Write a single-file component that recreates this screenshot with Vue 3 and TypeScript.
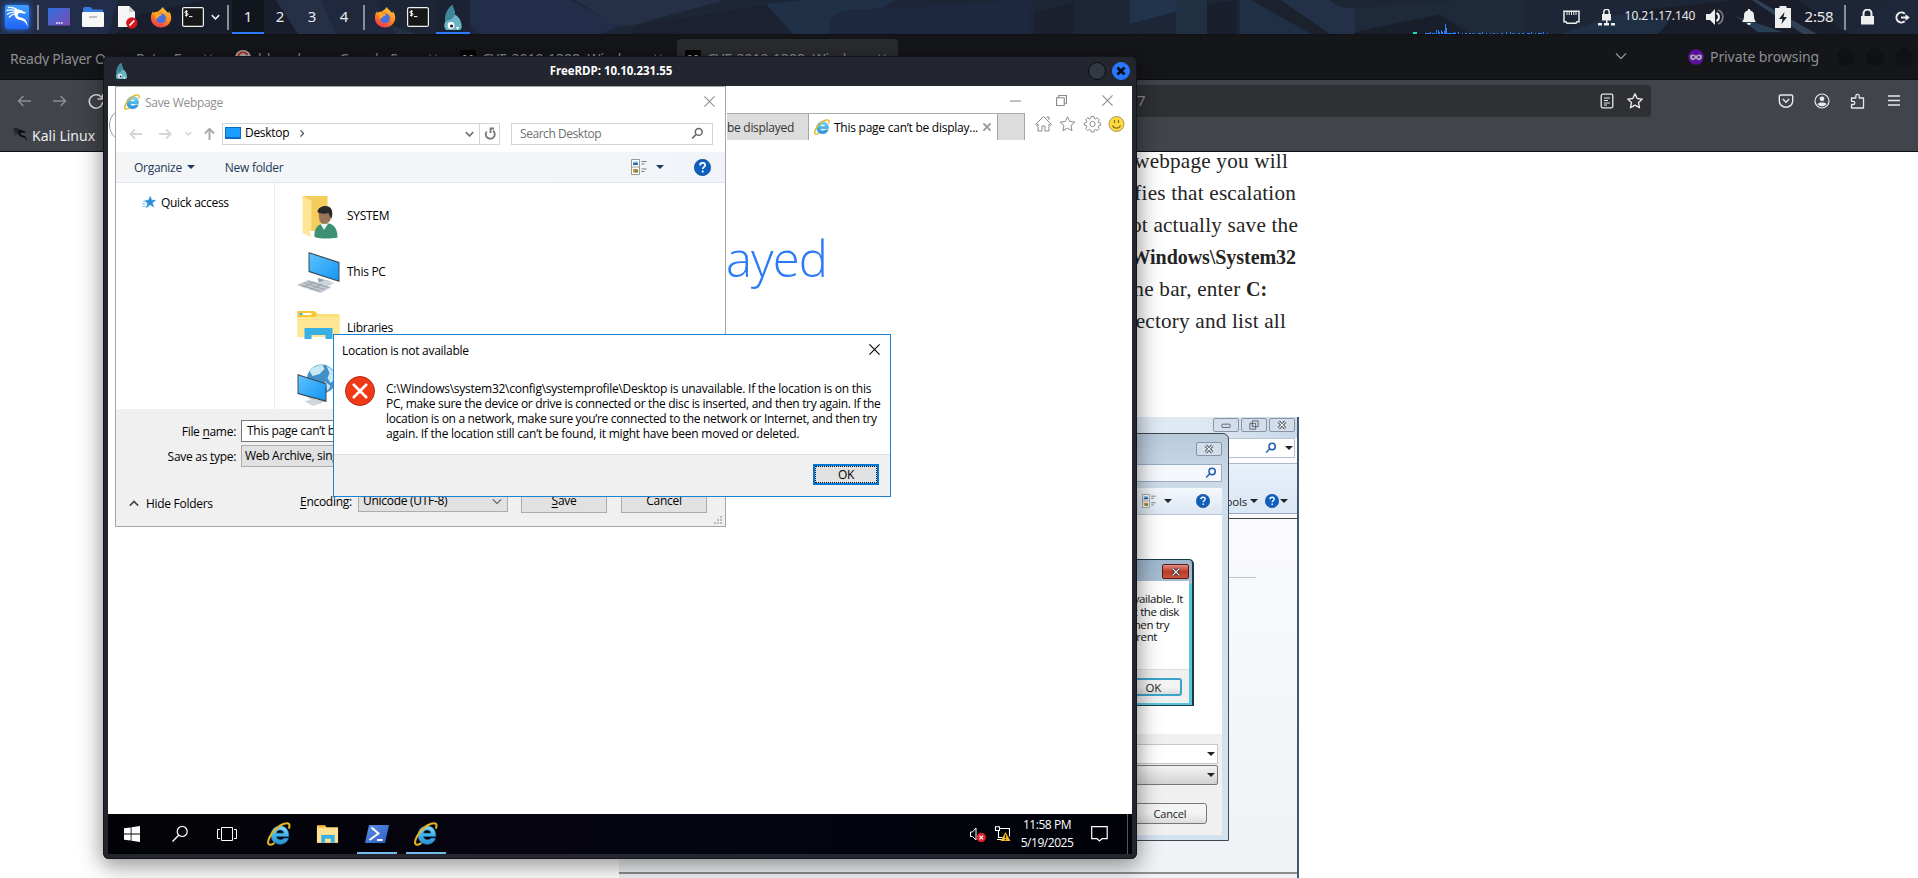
<script setup lang="ts">
interface Place { name: string; icon: string }

const places: Place[] = [
  { name: 'SYSTEM', icon: 'user-folder' },
  { name: 'This PC', icon: 'computer' },
  { name: 'Libraries', icon: 'libraries' },
  { name: 'Network', icon: 'network' },
]
const workspaces = [1, 2, 3, 4]
const taskbar = [
  { icon: 'ie', open: false },
  { icon: 'explorer', open: false },
  { icon: 'powershell', open: true },
  { icon: 'ie', open: true },
]
const bars: [number, number, number][] = [
  [12, 6, 1], [17, 1, 2], [19, 3, 1], [23, 1, 4], [25, 1, 4], [26, 1, 2], [28, 1, 4], [29, 1, 2], [31, 1, 3], [32, 1, 10], [33, 1, 6],
  [34, 9, 1], [41, 1, 2], [45, 1, 2], [49, 1, 1], [52, 2, 1], [56, 2, 1], [59, 1, 1], [61, 1, 1], [65, 3, 1], [69, 1, 2], [73, 1, 1],
  [77, 1, 1], [80, 2, 1], [84, 1, 1], [88, 2, 1], [93, 1, 2], [97, 1, 2], [99, 1, 1], [101, 1, 1], [105, 2, 1], [109, 2, 1],
  [114, 3, 1], [118, 1, 2], [122, 1, 1], [125, 4, 1], [130, 1, 2], [134, 1, 1],
]
</script>

<template>
  <div class="desktop">
    <svg class="defs" aria-hidden="true">
      <defs>
        <linearGradient id="g-kali" x1="0" y1="0" x2="0" y2="1"><stop offset="0" stop-color="#3fa0ff" /><stop offset="1" stop-color="#1f63f5" /></linearGradient>
        <linearGradient id="g-desk" x1="0" y1="0" x2="1" y2="1"><stop offset="0" stop-color="#2f6fe0" /><stop offset="1" stop-color="#7d4bb5" /></linearGradient>
        <linearGradient id="g-fox" x1="0.8" y1="0" x2="0.3" y2="1"><stop offset="0" stop-color="#ffd23e" /><stop offset="0.5" stop-color="#ff8a1f" /><stop offset="1" stop-color="#f4364c" /></linearGradient>
        <linearGradient id="g-ie" x1="0" y1="0" x2="0" y2="1"><stop offset="0" stop-color="#8fdcf8" /><stop offset="0.5" stop-color="#41b4e8" /><stop offset="1" stop-color="#2a8fd4" /></linearGradient>
        <linearGradient id="g-screen" x1="0" y1="0" x2="1" y2="1"><stop offset="0" stop-color="#5cc3ff" /><stop offset="1" stop-color="#1595f2" /></linearGradient>
        <linearGradient id="g-ps" x1="0" y1="0" x2="1" y2="1"><stop offset="0" stop-color="#5a8fe6" /><stop offset="1" stop-color="#2a5cc0" /></linearGradient>
      </defs>
      <symbol id="i-dragon" viewBox="0 0 24 24">
        <path d="M11 4.800c3-.6 5 .2 6.500 1.200l4 2-2.500.8c-2-.8-5-1.200-6 .2-.8 1.400 0 2.800 1.500 3.200 5 .8 8.300 2.800 8 10-1.200-5-3.500-6.600-7.500-7.200C9.500 14.200 8 8.500 11 4.800z" fill="currentColor" />
        <path d="M3 2.500c4-.4 7.500.6 9.500 2.700M1.500 5.500c3-.8 6.500-.9 9.500.2M2 9.500c2-1.800 5-2.700 9-2.300M4 12.500c1.500-2 3.500-3.200 6-3.600" fill="none" stroke="currentColor" stroke-width="1.300" />
      </symbol>
      <symbol id="i-firefox" viewBox="0 0 24 24">
        <path d="M14 1c1 3 4.500 4 6 7 .6-.5.500-1.600.3-2.500C22.500 8 23.500 11 23 14.500 22 20 17.500 23.400 12 23.400 5.800 23.400 1 18.800 1 12.800c0-3 .8-5.300 2.200-7 .1 1 .4 1.600.9 2C5 6.500 6.500 6 8 6.300 9.500 5 12 4 14 1z" fill="url(#g-fox)" />
        <circle cx="12" cy="13.500" r="5.400" fill="#4a6fe0" />
        <path d="M3 8c3-2 5-1 6.500.4 1.500.3 3 .1 3.500 1.100-.8 1.500-2.600 1.300-3.500 2.300-.9 1-.9 2-2 2-2 0-2.500-1.500-2-3z" fill="#ffa62b" />
      </symbol>
      <symbol id="i-terminal" viewBox="0 0 22 20">
        <rect x=".6" y=".6" width="20.800" height="18.800" rx="1.500" fill="#171717" stroke="#f0f0ee" stroke-width="1.200" />
        <path d="M5.800 4.200H4a1 1 0 0 0 0 2.100h.9a1 1 0 0 1 0 2.100H3M4.400 3.200v6.400M7 9.600h3.400" fill="none" stroke="#fff" stroke-width="1" />
      </symbol>
      <symbol id="i-freerdp" viewBox="0 0 20 25">
        <path d="M9.500 0c.3 2.500 2.800 6 2.600 9.800 3.400 1.700 7 6.200 6.600 13.200L17 25H3c-2-2.600-2.500-5.500-.6-8.500C1.600 9.500 4.500 3.600 9.500 0z" fill="#6ab5c4" />
        <path d="M9.500 0c.3 2.500 2.800 6 2.600 9.800L9 14l-6.600 2.500C1.600 9.500 4.500 3.600 9.500 0z" fill="#41859a" />
        <circle cx="8" cy="20.500" r="3.400" fill="#fff" /><circle cx="8.600" cy="21" r="1.600" fill="#222" />
        <path d="M13 22l1.500 3L16 22" fill="#fff" />
      </symbol>
      <symbol id="i-ie" viewBox="0 0 24 24">
        <path fill-rule="evenodd" d="M21.800 14.600H9.400c.2 2 1.700 3.200 3.900 3.200 1.600 0 2.800-.5 3.500-1.500h4.700c-1.200 3.600-4.300 6-8.300 6-5.300 0-9.200-3.800-9.200-9.200S8 3.900 13.200 3.900s8.900 4 8.600 10.700zM9.400 11.200h7.500c-.2-2-1.700-3.200-3.800-3.200s-3.500 1.200-3.700 3.200z" fill="url(#g-ie)" stroke="#2684c4" stroke-width=".5" />
        <path d="M7.500 21C4.500 23.200 1.800 23.300 1.200 21.400.3 18.200 4 11 9.500 6.300 14.500 2 20.300.2 22 2c.8 1 .6 2.600-.2 4.600" fill="none" stroke="#e6b422" stroke-width="2.100" />
      </symbol>
      <symbol id="i-star" viewBox="0 0 18 18"><path d="M9 1.800l2.200 4.700 5.100.6-3.800 3.500 1 5.100L9 13.200l-4.500 2.500 1-5.100L1.700 7.100l5.100-.6z" fill="none" stroke="currentColor" stroke-linejoin="round" /></symbol>
      <symbol id="i-close" viewBox="0 0 10 10"><path d="M.4.4l9.200 9.200M9.600.4L.4 9.600" stroke="currentColor" /></symbol>
      <symbol id="i-back" viewBox="0 0 14 12"><path d="M14 6H1.500M6.500 1l-5 5 5 5" fill="none" stroke="currentColor" /></symbol>
      <symbol id="i-chevron" viewBox="0 0 12 8"><path d="M1 1.500l5 5 5-5" fill="none" stroke="currentColor" /></symbol>
      <symbol id="i-search" viewBox="0 0 16 16"><circle cx="9.500" cy="6" r="4.200" fill="none" stroke="currentColor" /><path d="M6.500 9L1.500 14" stroke="currentColor" /></symbol>
      <symbol id="i-explorer" viewBox="0 0 24 20">
        <path d="M1 1h8l2 2h12v16H1z" fill="#f7d774" /><path d="M1 4h22v15H1z" fill="#ffe394" /><path d="M2 1h8v2H2z" fill="#f2b92e" />
        <path d="M5.500 19v-8h14v8h-4v-4h-6v4z" fill="#38b0e4" />
      </symbol>
      <symbol id="i-powershell" viewBox="0 0 24 18">
        <path d="M4 0h20l-4 18H0z" fill="url(#g-ps)" /><path d="M6.500 2.500l7 6-9 6.500M12 15h5.500" fill="none" stroke="#fff" stroke-width="2" />
      </symbol>
      <symbol id="i-user-folder" viewBox="0 0 44 44">
        <path d="M7 1h25v36H15z" fill="#f4cd5c" /><path d="M7 1l9 5v36l-9-4z" fill="#ffe596" /><path d="M14 36h6v4l-4 2z" fill="#fff" />
        <path d="M19 42c-.8-7 2.500-12 8-13.500h7c5 1.500 8 6 8 14-7 1.500-17 1.500-23-.5z" fill="#3d9172" /><path d="M25 29l3.500 6 4-6z" fill="#eaf4f0" />
        <path d="M23 17c2-4 12-5 13 0l-1 8c-2 4-8 5-11 1z" fill="#9a7458" /><path d="M22 17c0-4 5-6.500 9.500-5.800 5 .8 6.500 6 4.500 12.300-1.500-1-2-3-3-5.500-4 1-8 1-11-1z" fill="#28292b" />
      </symbol>
      <symbol id="i-computer" viewBox="0 0 44 44">
        <path d="M22 27l12 3 2 4-12-1z" fill="#8e9aa5" /><path d="M20 32l10-3 9 3-9 4z" fill="#cbd3dc" />
        <path d="M13 1l31 10v20L13 21z" fill="#3d4c58" /><path d="M14 2.500l29 9.500v17.500L14 20z" fill="url(#g-screen)" />
        <path d="M1 34l12-5 23 7-11 6z" fill="#c1c8cf" /><path d="M5 34l19 6M9 32l20 6.500M13 30.500l20 6M8 36l11-5M15 38.500l11-5" stroke="#8f98a2" stroke-width=".8" />
      </symbol>
      <symbol id="i-libraries" viewBox="0 0 44 44">
        <g transform="translate(0 3)"><path d="M2 1h17l3 3h22v23H2z" fill="#fddf77" /><path d="M2 1h17l3 3-3 3H2z" fill="#f8c934" /><path d="M4 3h12v2H4z" fill="#fff" /><path d="M4 3h3v2H4z" fill="#38b0e4" />
          <path d="M2 7h42v20H2z" fill="#ffe694" /><path d="M9 29V18h28v11h-7v-4H16v4z" fill="#38b0e4" /></g>
      </symbol>
      <symbol id="i-network" viewBox="0 0 44 44">
        <circle cx="26" cy="16" r="14.500" fill="#418fc4" /><path d="M14 8c4-5 9-6 13-6l2 4-5 5-7 2zM31 3c5 2 9 7 9 13l-5 4-3-5 2-5zM29 18l6 5-3 5z" fill="#c9e8f5" />
        <path d="M12 34h16l3 5H18z" fill="#c5ced6" /><path d="M2 11l29 9.500V39L2 31z" fill="#3d4c58" /><path d="M3 12.500l27 8.700v16L3 30z" fill="url(#g-screen)" /><path d="M9 38l12-2 6 4-10 3z" fill="#cfd6dd" />
      </symbol>
      <symbol id="i-help" viewBox="0 0 16 16"><circle cx="8" cy="8" r="7.700" fill="#0f5fc0" stroke="#0a3d80" stroke-width=".6" /><path d="M5.700 6c0-1.500 1-2.300 2.400-2.300S10.500 4.500 10.500 5.800c0 1.600-2.300 1.700-2.300 3.700M8.200 10.900v1.700" fill="none" stroke="#fff" stroke-width="1.600" /></symbol>
      <symbol id="i-view" viewBox="0 0 16 16"><path d="M.5.500h8v15h-8zM.5 8h8" fill="#fff" stroke="#999" /><path d="M2 2.500h5V6H2z" fill="#8cc6ef" /><path d="M2 4.500l3-1 2 1V6H2z" fill="#2e62a8" /><path d="M2 10h5v3.500H2z" fill="#e0903a" /><path d="M4 11h3v2.500H4z" fill="#4f9a4a" /><path d="M10.500 2.500h5M10.500 5h3M10.500 10h5M10.500 12.500h3" stroke="#777" /></symbol>
    </svg>

    <!-- Browser behind the remote session -->
    <section class="browser">
      <div class="tabs">
        <div class="tab t1"><span>Ready Player One… Retro Fa</span><svg class="x"><use href="#i-close" /></svg></div>
        <div class="tab t2"><svg class="google" viewBox="0 0 16 16"><circle cx="8" cy="8" r="8" fill="#b0b0b0" /><path d="M12.500 5A5 5 0 1 0 13 8H8" fill="none" stroke="#b2322c" stroke-width="2" /></svg><span>hhupd.exe - Google Sear</span><svg class="x"><use href="#i-close" /></svg></div>
        <div class="tab t3"><i class="medium">M</i><span>CVE-2019-1388: Windo</span><svg class="x"><use href="#i-close" /></svg></div>
        <div class="tab t4 on"><i class="medium">M</i><span>CVE-2019-1388: Windo</span><svg class="x"><use href="#i-close" /></svg></div>
        <span class="plus">+</span>
        <svg class="alltabs"><use href="#i-chevron" /></svg>
        <svg class="mask" viewBox="0 0 16 16"><circle cx="8" cy="8" r="7.800" fill="#5a129b" /><path d="M2 6.500C4 5 6 5.500 8 6.800 10 5.500 12 5 14 6.500c.3 3-1 4.700-3 4.700-1.500 0-2.200-1.400-3-1.400s-1.500 1.400-3 1.400c-2 0-3.300-1.700-3-4.700z" fill="#aaa3b0" /><circle cx="5.300" cy="8.200" r="1.100" fill="#5a129b" /><circle cx="10.700" cy="8.200" r="1.100" fill="#5a129b" /></svg>
        <span class="private">Private browsing</span>
        <i class="dot"></i><i class="dot"></i><i class="dot"></i>
      </div>
      <div class="toolbar">
        <svg class="nav"><use href="#i-back" /></svg>
        <svg class="nav flip"><use href="#i-back" /></svg>
        <svg class="reload" viewBox="0 0 16 16"><path d="M13.800 5A6.700 6.700 0 1 0 14.700 9M14.500 1v5h-5" fill="none" stroke="#e4e4e6" stroke-width="1.500" /></svg>
        <div class="url"><span>7</span>
          <svg viewBox="0 0 16 16"><rect x="2.200" y="1.200" width="11.600" height="13.600" rx="1.500" fill="none" stroke="currentColor" stroke-width="1.300" /><path d="M5 5h6M5 7.500h4M5 10h6M5 12h3" stroke="currentColor" stroke-width="1.100" /></svg>
          <svg class="fav"><use href="#i-star" /></svg>
        </div>
        <svg class="tool a" viewBox="0 0 16 16"><path d="M2.500 2h11c.7 0 1.200.5 1.200 1.200V8a6.700 6.200 0 0 1-13.400 0V3.200C1.300 2.500 1.800 2 2.500 2zM4.800 6L8 9.200 11.200 6" fill="none" stroke="currentColor" stroke-width="1.400" /></svg>
        <svg class="tool" viewBox="0 0 16 16"><circle cx="8" cy="8" r="7" fill="none" stroke="currentColor" stroke-width="1.200" /><circle cx="8" cy="5.800" r="2.400" fill="currentColor" /><path d="M3.600 11.200c0-2.300 8.800-2.300 8.800 0-2 2.800-6.800 2.800-8.800 0z" fill="currentColor" /></svg>
        <svg class="tool" viewBox="0 0 16 16"><path d="M1.500 5h4.300V3a1.700 1.700 0 0 1 3.400 0v2h4.300v10H1.500v-3.500h1.700a1.600 1.600 0 0 0 0-3.200H1.500z" fill="none" stroke="currentColor" stroke-width="1.300" stroke-linejoin="round" /></svg>
        <svg class="tool" viewBox="0 0 16 16"><path d="M2 3h12M2 7.500h12M2 12h12" stroke="currentColor" stroke-width="1.300" /></svg>
      </div>
      <div class="bookmarks"><svg><use href="#i-dragon" /></svg>Kali Linux</div>
      <div class="page">
        <article>
          <p class="r12">saving the webpage you will</p>
          <p class="r3">which verifies that escalation</p>
          <p class="r1">do not actually save the</p>
          <p class="r3"><b>C:\Windows\System32</b></p>
          <p class="r33">In the name bar, enter <b>C:</b></p>
          <p class="r14">in the directory and list all</p>
          <figure>
            <div class="w7main">
              <div class="w7title"><i><svg viewBox="0 0 12 12"><rect x="1" y="5" width="10" height="4" rx="1" /></svg></i><i><svg viewBox="0 0 12 12"><path d="M4 1h7v7H4zM1 4h7v7H1zM4 7h1" /></svg></i><i><svg viewBox="0 0 12 12"><path d="M2 2l8 8M10 2l-8 8" stroke-width="3.600" /><path d="M2 2l8 8M10 2l-8 8" class="wh" /></svg></i></div>
              <div class="w7addr"><svg class="mag"><use href="#i-search" /></svg><em class="tri"></em></div>
              <div class="w7cmd"><span>Tools</span><em class="tri"></em><svg class="help"><use href="#i-help" /></svg><em class="tri"></em></div>
              <div class="w7edge"></div>
              <hr>
              <div class="w7status"></div>
            </div>
            <div class="w7dialog">
              <i class="w7x"><svg viewBox="0 0 12 12"><path d="M2 2l8 8M10 2l-8 8" stroke-width="3.600" /><path d="M2 2l8 8M10 2l-8 8" class="wh" /></svg></i>
              <div class="w7search"><svg class="mag"><use href="#i-search" /></svg></div>
              <div class="w7bar"><svg><use href="#i-view" /></svg><em class="tri"></em><svg class="help"><use href="#i-help" /></svg></div>
              <div class="w7list"></div>
              <div class="w7pane"><div class="combo"><em class="tri"></em></div><div class="combo grey"><em class="tri"></em></div><button>Cancel</button></div>
            </div>
            <div class="w7error">
              <i class="red"><svg viewBox="0 0 12 12"><path d="M2 2l8 8M10 2l-8 8" stroke="#533" stroke-width="4" /><path d="M2 2l8 8M10 2l-8 8" class="wh" /></svg></i>
              <div class="w7msg"><span class="m1">is unavailable. It</span><span class="m2">that the disk</span><span class="m3">then try</span><span class="m4">different</span></div>
              <div class="w7foot"><button>OK</button></div>
            </div>
          </figure>
        </article>
      </div>
    </section>

    <!-- Remote desktop window -->
    <section class="rdp">
      <header class="rdp-title">
        <svg class="logo"><use href="#i-freerdp" /></svg>
        <h1>FreeRDP: 10.10.231.55</h1>
        <i class="round"></i>
        <i class="round blue"><svg viewBox="0 0 10 10"><path d="M2 2l6 6M8 2L2 8" stroke="#0b0f1c" stroke-width="2.400" /></svg></i>
      </header>
      <div class="session">
        <div class="ie-win">
          <i class="ie-back"></i>
          <div class="ie-controls">
            <svg viewBox="0 0 10 10"><path d="M0 5.500h10" stroke="currentColor" /></svg>
            <svg viewBox="0 0 10 10"><path d="M.5 2.500h7v7h-7zM2.500 2.500v-2h7v7h-2" fill="none" stroke="currentColor" /></svg>
            <svg><use href="#i-close" /></svg>
          </div>
          <div class="ie-tabs">
            <div class="ie-tab old">be displayed</div>
            <div class="ie-tab"><svg class="e16"><use href="#i-ie" /></svg><span>This page can’t be display...</span><svg class="tx"><use href="#i-close" /></svg></div>
            <div class="ie-stub"></div>
            <svg viewBox="0 0 18 18"><path d="M1 9.500L9 1.500l8 8-1 .8-1.500-1.200V16h-4v-5h-3v5h-4V9.100L2 10.300zM12.500 3v-1h2v3" fill="none" stroke="currentColor" /></svg>
            <svg><use href="#i-star" /></svg>
            <svg viewBox="0 0 18 18"><circle cx="9" cy="9" r="2.600" fill="none" stroke="currentColor" /><path d="M7.600 1.500h2.800l.4 1.900 1.300.5 1.700-1.100 2 2-1.100 1.700.5 1.300 1.900.4v2l-1.900.4-.5 1.300 1.100 1.700-2 2-1.700-1.100-1.300.5-.4 1.900H7.600l-.4-1.900-1.300-.5-1.700 1.100-2-2 1.100-1.700-.5-1.300-1.900-.4v-2l1.900-.4.5-1.300-1.100-1.700 2-2 1.700 1.100 1.300-.5z" fill="none" stroke="currentColor" /></svg>
            <svg viewBox="0 0 18 18"><circle cx="9" cy="9" r="7.500" fill="#ffd83b" stroke="#a89a6a" /><path d="M7 5v3M11 5v3M5 10.500c1.500 3.500 6.500 3.500 8 0" fill="none" stroke="#84702a" stroke-width="1.200" /></svg>
          </div>
          <h2>ayed</h2>
        </div>

        <div class="save">
          <div class="save-title"><svg class="e16"><use href="#i-ie" /></svg><span>Save Webpage</span><svg class="cx"><use href="#i-close" /></svg></div>
          <div class="save-nav">
            <svg class="ar"><use href="#i-back" /></svg><svg class="ar fwd"><use href="#i-back" /></svg>
            <svg class="mini"><use href="#i-chevron" /></svg>
            <svg class="ar up"><use href="#i-back" /></svg>
            <div class="addr">
              <i class="screen"></i><span>Desktop</span><svg class="crumb"><use href="#i-chevron" /></svg><svg class="drop"><use href="#i-chevron" /></svg>
              <div class="refresh"><svg viewBox="0 0 12 14"><path d="M3 3.700A4.500 4.500 0 1 0 9.300 4.500M2 1.500h3.500V6" fill="none" stroke="#777" stroke-width="1.800" /></svg></div>
            </div>
            <div class="search"><span>Search Desktop</span><svg><use href="#i-search" /></svg></div>
          </div>
          <div class="save-cmd"><span>Organize</span><em class="tri"></em><span class="nf">New folder</span><svg class="view"><use href="#i-view" /></svg><em class="tri"></em><svg class="help"><use href="#i-help" /></svg></div>
          <div class="save-body">
            <aside><svg viewBox="0 0 16 14"><path d="M9.500 0l1.500 4.500h4.500l-3.700 2.900 1.400 4.600L9.300 9.300 5 13l1.500-5L3.500 5l4-.5zM1 5.500h3M0 8.500h4M1 11.500h3" fill="#2b8fd8" stroke="#2b8fd8" stroke-width=".7" /></svg>Quick access</aside>
            <ul><li v-for="p in places" :key="p.name"><svg><use :href="`#i-${p.icon}`" /></svg>{{ p.name }}</li></ul>
          </div>
          <div class="save-pane">
            <label><span>File <u>n</u>ame:</span><b class="field">This page can’t be displayed</b></label>
            <label><span>Save as <u>t</u>ype:</span><b class="field select">Web Archive, single file (*.mht)</b></label>
            <div class="actions">
              <span class="hide"><svg><use href="#i-chevron" /></svg>Hide Folders</span>
              <span class="enc"><u>E</u>ncoding:</span>
              <span class="box combo2">Unicode (UTF-8)<svg><use href="#i-chevron" /></svg></span>
              <span class="box btn"><u>S</u>ave</span>
              <span class="box btn">Cancel</span>
            </div>
            <svg class="grip" viewBox="0 0 9 9"><path d="M6 0h2v2H6zM6 3h2v2H6zM3 3h2v2H3zM6 6h2v2H6zM3 6h2v2H3zM0 6h2v2H0z" fill="#bdbdbd" /></svg>
          </div>
        </div>

        <div class="error" role="alertdialog">
          <div class="error-title"><span>Location is not available</span><svg><use href="#i-close" /></svg></div>
          <div class="error-body">
            <svg viewBox="0 0 30 30"><circle cx="15" cy="15" r="14.500" fill="#f03a17" stroke="#b32a1a" /><path d="M8 8l14 14M22 8L8 22" stroke="#fff" stroke-width="2.600" /></svg>
            <p><span class="wide">C:\Windows\system32\config\systemprofile\Desktop is unavailable. If the location is on this</span><br>PC, make sure the device or drive is connected or the disc is inserted, and then try again. If the<br>location is on a network, make sure you’re connected to the network or Internet, and then try<br><span class="wide">again. If the location still can’t be found, it might have been moved or deleted.</span></p>
          </div>
          <div class="error-foot"><button><span>OK</span></button></div>
        </div>

        <footer class="taskbar">
          <div class="tc"><svg class="s16" viewBox="0 0 16 16"><path d="M0 2.300l6.700-.9v6.200H0zM7.500 1.300L16 0v7.600H7.500zM0 8.400h6.700v6.200L0 13.700zM7.500 8.400H16V16l-8.500-1.200z" fill="#fff" /></svg></div>
          <div class="tc"><svg class="s16" viewBox="0 0 16 16"><circle cx="10.200" cy="5.500" r="5" fill="none" stroke="#fff" stroke-width="1.200" /><path d="M6.700 9.200L.5 15.500" stroke="#fff" stroke-width="1.400" /></svg></div>
          <div class="tc tv"><svg class="s20" viewBox="0 0 20 14"><path d="M4.500.5h11v13h-11zM3 2.500H.5v9H3M17 2.500h2.500v9H17" fill="none" stroke="#fff" /></svg></div>
          <div v-for="(t, i) in taskbar" :key="i" class="tc app" :class="[t.icon, { open: t.open }]"><svg><use :href="`#i-${t.icon}`" /></svg></div>
          <svg class="tray vol" viewBox="0 0 18 16"><path d="M1.500 6h2L7 2v12L3.500 10.500h-2z" fill="none" stroke="#fff" /><circle cx="12.300" cy="11.500" r="4.700" fill="#e0202c" /><path d="M10.500 9.700l3.600 3.600M14.100 9.700l-3.600 3.600" stroke="#fff" stroke-width="1.200" /></svg>
          <svg class="tray net" viewBox="0 0 18 16"><path d="M5 2.500h10.500v8M4.500 5v6.500h4M1.500.8h4v3.700h-4zM3 13.500h5" fill="none" stroke="#fff" stroke-width="1.100" /><path d="M11.500 6l5 9h-10z" fill="#f6b81a" /><path d="M11.500 8.800v3.200M11.500 13v1.200" stroke="#222" stroke-width="1.300" /></svg>
          <div class="when"><span>11:58 PM</span><span>5/19/2025</span></div>
          <svg class="tray note" viewBox="0 0 17 16"><path d="M.7.700h15.500v12H11L8.500 15 6 12.700H.7z" fill="none" stroke="#fff" stroke-width="1.200" /></svg>
          <i class="peek"></i>
        </footer>
      </div>
    </section>

    <!-- Host panel -->
    <header class="panel">
      <svg class="wallpaper" viewBox="0 0 1918 34" preserveAspectRatio="none">
        <path d="M0 0h1918v34H0z" fill="#1e2739" />
        <path d="M0 0h118l-10 34H0z" fill="#243150" /><path d="M115 34l26-20 65-14h70l22 34z" fill="#191d2a" /><path d="M276 0h45l95 34H298z" fill="#28344e" />
        <path d="M321 0h55l20 34h-60z" fill="#202a41" /><path d="M440 0h130l50 26-20 8H480z" fill="#233051" /><path d="M575 0h150l-95 26q-16 2-26-8z" fill="#28344d" />
        <path d="M632 34q-2-7 10-10L766 5l30 29z" fill="#1c2130" /><path d="M766 4l40-4h90l-60 34h-43z" fill="#22344d" /><path d="M830 34v-14q4-8 20-10L1030 0v34z" fill="#1e2a42" />
        <path d="M1034 12l40-10v32h-40z" fill="#1b1f2c" /><path d="M1074 0h56v24l46-12v-12h-60z" fill="#253a55" /><path d="M1130 24l46-12v22h-46z" fill="#1d2738" /><path d="M1207 4l30-4v34h-30z" fill="#1a1e2b" />
        <path d="M1176 0h31v34h-31z" fill="#223347" /><path d="M1240 0h40l56 34h-96z" fill="#20334b" /><path d="M1251 0h30l50 34h-20z" fill="#1c202d" /><path d="M1281 0h48q10 9 26 8v26h-25z" fill="#24364e" />
        <path d="M1355 32l84-18 30 20h-114z" fill="#191d29" /><path d="M1355 8l110-8h60v34h-50l-34-20-86 18z" fill="#1f2b3d" /><path d="M1600 34l42-24 96-10h60l50 34z" fill="#191c27" />
        <path d="M1752 0h5l60 34h-14z" fill="#374a62" /><path d="M1735 16l48 16h-25z" fill="#2c4761" /><path d="M1560 34l60-20 50 6-12 14z" fill="#22354a" /><path d="M1850 34l40-34h28v34z" fill="#202a3c" />
        <path d="M0 0h1918v34H0z" fill="#1c2333" opacity=".25" />
      </svg>
      <span class="c34"><svg class="kali" viewBox="0 0 24 24"><rect width="24" height="24" rx="2" fill="url(#g-kali)" /><use href="#i-dragon" color="#fff" /></svg></span>
      <i class="sep s1"></i>
      <span class="c34"><svg width="22" height="18" viewBox="0 0 22 18"><rect width="22" height="17.500" rx="1" fill="url(#g-desk)" /><path d="M8 15h1.500M10.500 15H12M13 15h1.500" stroke="#fff" stroke-width="1.500" /></svg></span>
      <span class="c34"><svg width="22" height="20" viewBox="0 0 22 20"><path d="M1 6V1.500Q1 0 2.500 0h6L11 2.500h9q1 0 1 1V6z" fill="#3578e0" /><rect y="5" width="22" height="15" rx="1" fill="#f6f6f6" /><path d="M7 10h8" stroke="#bbb" stroke-width="1.800" /></svg></span>
      <span class="c34"><svg width="21" height="23" viewBox="0 0 21 23"><path d="M1 0h11l6 6v15H1z" fill="#f7f7f7" /><path d="M12 0l6 6h-6z" fill="#cfcfcf" /><circle cx="14.800" cy="17" r="5.700" fill="#d0181e" /><path d="M12.500 19.500l4.800-5" stroke="#fff" stroke-width="1.800" /></svg></span>
      <span class="c34"><svg width="22" height="22"><use href="#i-firefox" /></svg></span>
      <span class="c30"><svg width="22" height="20"><use href="#i-terminal" /></svg></span>
      <span class="c14"><svg class="pchev"><use href="#i-chevron" /></svg></span>
      <i class="sep s2"></i>
      <span v-for="n in workspaces" :key="n" class="ws" :class="{ on: n === 1 }">{{ n }}</span>
      <i class="sep s3"></i>
      <span class="c30"><svg width="22" height="22"><use href="#i-firefox" /></svg></span>
      <span class="c36"><svg width="22" height="20"><use href="#i-terminal" /></svg></span>
      <span class="c34 task"><svg width="20" height="25"><use href="#i-freerdp" /></svg></span>
      <span class="grow"></span>
      <svg class="graph" viewBox="0 0 140 12"><path d="M0 10h4v2H0z" fill="#24d6c2" /><rect v-for="b in bars" :key="b[0]" :x="b[0]" :y="12 - b[2]" :width="b[1]" :height="b[2]" fill="#2a7fff" /></svg>
      <span class="c40"><svg width="17" height="14" viewBox="0 0 17 14"><path d="M1 1.200h15v10.500h-2l-1 1.500H4l-1-1.500H1z" fill="none" stroke="#eee" stroke-width="1.500" /><path d="M4 2v3M6.200 2v3M8.500 2v3M10.800 2v3M13 2v3" stroke="#eee" /></svg></span>
      <span class="c30"><svg width="17" height="17" viewBox="0 0 17 17"><path d="M4 5h9v6.500H4zM0 14h4v2.500H0zM6 14h5v2.500H6zM13 14h4v2.500h-4zM8 11h1.500v4H8z" fill="#eee" /><path d="M5.800 6V3a2.700 2.700 0 0 1 5.400 0v3" fill="none" stroke="#eee" stroke-width="1.500" /></svg></span>
      <span class="ip">10.21.17.140</span>
      <span class="c26"><svg width="18" height="16" viewBox="0 0 18 16"><path d="M0 5h4l5-5v16L4 11H0z" fill="#eee" /><path d="M10.500 4a4.500 4.500 0 0 1 0 8" fill="none" stroke="#eee" stroke-width="2" /><path d="M12 1a7.500 7.500 0 0 1 0 14" fill="none" stroke="#777b84" stroke-width="1.800" /></svg></span>
      <span class="c42"><svg width="14" height="16" viewBox="0 0 14 16"><path d="M7 0c1 0 1.300.7 1.300 1.400C11 2 12 4 12 6.500c0 3.500.5 4.500 2 6.500H0c1.500-2 2-3 2-6.500C2 4 3 2 5.700 1.400 5.700.7 6 0 7 0zM5 14h4a2 2 0 0 1-4 0z" fill="#eee" /></svg></span>
      <span class="c26"><svg width="16" height="22" viewBox="0 0 16 22"><path d="M4.500 0h7v2H16v20H0V2h4.500z" fill="#eee" /><path d="M9.500 6L4 13h3.500l-1 5L12 11H8.500z" fill="#1b2030" /></svg></span>
      <span class="clock">2:58</span>
      <i class="sep s4"></i>
      <span class="c38"><svg width="13" height="16" viewBox="0 0 13 16"><path d="M0 7h13v8.500H0z" fill="#eee" /><path d="M2.500 8V4.500a4 4 0 0 1 8 0V8" fill="none" stroke="#eee" stroke-width="2" /></svg></span>
      <span class="c32"><svg width="15" height="13" viewBox="0 0 15 13"><path d="M9.700 2.700A5 5 0 1 0 9.700 10.300M6 6.500h6" fill="none" stroke="#eee" stroke-width="2" /><path d="M10.500 3.200l4.300 3.300-4.300 3.300z" fill="#eee" /></svg></span>
    </header>
  </div>
</template>

<style>
html, body { margin: 0; overflow: hidden; background: #fff; }
</style>

<style scoped>
* { box-sizing: border-box; }
.desktop { position: relative; width: 1918px; height: 878px; overflow: hidden; background: #fff; font: 12px/15px "Open Sans", "Noto Sans", sans-serif; letter-spacing: -0.29px; color: #000; white-space: nowrap; }
.defs { position: absolute; width: 0; height: 0; }
svg { flex: none; display: block; }
i, em, b { font-style: normal; flex: none; }
p, h1, h2, ul, figure { margin: 0; padding: 0; font-weight: 400; }
.tri { width: 0; height: 0; border: 4px solid transparent; border-top: 4.500px solid currentColor; border-bottom: 0; }

/* host panel */
.panel { position: absolute; inset: 0 0 auto; height: 34px; display: flex; align-items: center; overflow: hidden; color: #e9e9ea; font: 15px/34px "Noto Sans", sans-serif; letter-spacing: -0.2px; }
.wallpaper { position: absolute; inset: 0; width: 100%; height: 100%; }
.panel > span { position: relative; height: 34px; display: flex; flex: none; align-items: center; justify-content: center; }
.c14 { width: 14px; } .c26 { width: 26px; } .c30 { width: 30px; } .c32 { width: 32px; } .c34 { width: 34px; } .c36 { width: 36px; } .c38 { width: 38px; } .c40 { width: 40px; } .c42 { width: 42px; }
.panel > .grow { flex: 1; }
.kali { width: 24px; height: 24px; filter: drop-shadow(0 0 3px #2a7bff); }
.sep { position: relative; width: 2px; height: 25px; background: #8b8e95; }
.s1 { margin: 0 3px; } .s2 { margin: 0 3px 0 5px; } .s3 { margin: 0 5px 0 3px; } .s4 { margin: 0 2px; }
.pchev { width: 9px; height: 6px; color: #eee; stroke-width: 2; }
.ws { width: 32px; padding-bottom: 2px; }
.ws.on { background: #11151e; }
.ws.on, .task { box-shadow: inset 0 -2px #2a7bff; }
.task { background: #1a2233; }
.graph { position: absolute; left: 1413px; top: 22px; width: 140px; height: 12px; }
.ip { width: 81px; font-size: 12px; letter-spacing: -0.05px; padding: 0 3px 2px 0; }
.clock { width: 46px; padding-bottom: 2px; }

/* browser */
.browser { position: absolute; inset: 34px 0 0; display: flex; flex-direction: column; font-family: "Noto Sans", sans-serif; font-size: 14px; letter-spacing: 0; color: #8d8e91; }
.tabs { height: 46px; flex: none; display: flex; align-items: flex-start; background: #15161a; border-bottom: 1px solid #0b0c0e; border-top: 1px solid #101114; }
.tab { display: flex; align-items: center; height: 38px; margin-top: 4px; border-radius: 4px; overflow: hidden; }
.tab span { flex: 1; overflow: hidden; }
.tab .x { width: 8px; height: 8px; margin-right: 12px; }
.t1 { width: 224px; padding-left: 10px; } .t1 span { letter-spacing: -0.25px; }
.t2 { width: 225px; padding-left: 11px; margin-right: 0; }
.t3 { width: 225px; padding-left: 11px; margin-right: 3px; }
.t4 { width: 221px; padding-left: 8px; background: #2b2c30; }
.google { width: 16px; height: 16px; margin-right: 7px; }
.medium { width: 16px; height: 16px; margin-right: 6px; background: #050505; color: #aaa; border-radius: 2px; font: bold 11px/16px "Liberation Serif", serif; text-align: center; }
.plus { margin: 15px 0 0 16px; font-size: 18px; line-height: 20px; }
.alltabs { width: 12px; height: 8px; margin: 17px 61px 0 auto; stroke-width: 1.4; }
.mask { width: 16px; height: 16px; margin: 14px 6px 0 0; }
.private { margin: 12px 0 0; font-size: 14px; line-height: 20px; letter-spacing: -0.08px; width: 127px; }
.dot { width: 18px; height: 18px; border-radius: 50%; background: #101115; margin: 13px 11px 0 0; }
.dot:last-child { margin-right: 5px; }
.toolbar { height: 39px; padding-top: 2px; flex: none; display: flex; align-items: center; background: #42444b; color: #e8e8ea; }
.nav { width: 14px; height: 12px; margin-left: 17px; color: #8c8d92; stroke-width: 1.5; }
.flip { transform: scaleX(-1); margin-left: 22px; }
.reload { width: 16px; height: 16px; margin-left: 21px; }
.url { display: flex; align-items: center; width: 1531px; height: 32px; margin-left: 16px; padding-left: 1017px; padding-right: 7px; gap: 11px; background: #2f3034; border-radius: 4px; }
.url span { flex: 1; color: #8e8e92; font-size: 15px; }
.url svg { width: 16px; height: 16px; } .url .fav { width: 18px; height: 18px; stroke-width: 1.4; }
.tool { width: 16px; height: 16px; margin-left: 20px; }
.tool.a { margin-left: 127px; }
.bookmarks { height: 33px; flex: none; display: flex; align-items: center; gap: 4px; padding-left: 12px; background: #42444b; border-bottom: 1px solid #0d0e10; color: #eee; font-size: 14px; }
.bookmarks svg { width: 16px; height: 16px; color: #0b0b0c; }
.page { flex: 1; overflow: hidden; background: #fff; }
article { width: 680px; margin: -7px 0 0 619px; color: #242424; font: 21.200px/32px "Liberation Serif", serif; letter-spacing: 0.2px; text-align: right; }
article p b { font-size: 20px; letter-spacing: -0.05px; }
.r1 { margin-right: 1px; } .r3 { margin-right: 3px; } .r12 { margin-right: 11px; } .r14 { margin-right: 13px; } .r33 { margin-right: 32px; }
figure { position: relative; height: 480px; margin-top: 80px; font: 11.500px/13px "Open Sans", sans-serif; letter-spacing: -0.2px; color: #222; overflow: hidden; }
.w7main { height: 100%; background: linear-gradient(#fdfdfe, #eef1f5); border-right: 2px solid #3f5a70; display: flex; flex-direction: column; align-items: stretch; }
.w7title { height: 21px; display: flex; justify-content: flex-end; gap: 2px; padding: 1px 2px 0; background: linear-gradient(90deg, #dfe9f3 85%, #c9d8e8); }
.w7title i, .w7x { width: 26px; height: 14px; border: 1px solid #8594a6; border-radius: 2px; background: #d3deea; display: flex; align-items: center; justify-content: center; }
i svg[viewBox="0 0 12 12"] { width: 10px; height: 10px; fill: none; stroke: #4c5664; }
.wh { stroke: #f5f5f7; stroke-width: 1.400; }
.w7addr { height: 20px; display: flex; align-items: center; justify-content: flex-end; gap: 8px; padding-right: 1px; margin-right: 2px; background: #fff; border: 1px solid #b5c4d4; }
.mag { width: 12px; height: 12px; color: #1f5fae; stroke-width: 2; }
.w7cmd { height: 51px; margin-top: 5px; display: flex; align-items: flex-end; justify-content: flex-end; gap: 3px; padding: 0 9px 5px; background: linear-gradient(#e9f1fa, #d9e6f4); border-top: 1px solid #a9b9cb; border-bottom: 1px solid #9aa9ba; }
.w7cmd .tri { margin-bottom: 5px; } .w7cmd .help { margin: 0 -2px 0 4px; }
.w7edge { height: 5px; border-bottom: 1px solid #444; }
.w7main > hr { width: 637px; margin: 58px 41px 0 0; border: 0; border-top: 1px solid #c2c4c8; }
.help { width: 14px; height: 14px; }
.w7status { margin-top: auto; height: 25px; background: #f0f1f3; border-top: 2px solid #8d8d90; }
.w7dialog { position: absolute; left: -20px; top: 16px; width: 630px; height: 408px; padding: 8px 6px 5px; background: linear-gradient(#b9cadb, #cfdeed 15%, #d4e2f0); border: 1px solid #3d4854; border-radius: 0 6px 0 0; display: flex; flex-direction: column; }
.w7x { align-self: flex-end; }
.w7search { height: 18px; margin-top: 8px; flex: none; display: flex; align-items: center; justify-content: flex-end; padding-right: 4px; background: #f4f8fc; border: 1px solid #9bacbf; }
.w7bar { height: 27px; margin-top: 6px; flex: none; display: flex; align-items: center; justify-content: flex-end; background: linear-gradient(#f4f8fc, #dbe6f2); padding-right: 12px; border-bottom: 1px solid #b9c7d6; }
.w7bar svg:first-child { width: 14px; height: 14px; margin-right: 8px; } .w7bar .help { margin-left: 24px; }
.w7list { flex: 1; background: #fff; }
.w7pane { height: 101px; flex: none; background: #f0f0f0; padding: 10px 4px; display: flex; flex-direction: column; align-items: flex-end; }
.combo { width: 100%; height: 20px; display: flex; align-items: center; justify-content: flex-end; padding-right: 2px; border: 1px solid #c5c7ca; background: #fff; }
.combo.grey { margin-top: 1px; border-color: #777; border-radius: 2px; background: linear-gradient(#f3f3f3, #d2d2d2); }
figure button { font: inherit; letter-spacing: inherit; color: inherit; padding: 0; border: 1px solid #777; border-radius: 3px; background: linear-gradient(#f4f4f4 50%, #dcdcdc); }
.w7pane button { width: 74px; height: 21px; margin: 18px 11px 0 0; font-size: 11px; }
.w7error { position: absolute; left: -20px; top: 142px; width: 595px; height: 147px; padding: 4px 3px 2px; border: 1px solid #173c48; border-right-width: 2px; border-radius: 0 5px 0 0; background: linear-gradient(#9fb6cd, #a9bed3 16%, #5cc4d6 17%); display: flex; flex-direction: column; }
.red { width: 27px; height: 15px; align-self: flex-end; border: 1px solid #5c1a16; border-radius: 2px; background: linear-gradient(#e29184, #bd3a27 50%, #c9543c); display: flex; align-items: center; justify-content: center; }
.w7msg { flex: 1; margin-top: 2px; padding-top: 12px; background: #fff; display: flex; flex-direction: column; align-items: flex-end; color: #111; line-height: 12.800px; letter-spacing: -0.4px; }
.m1 { margin-right: 6px; } .m2 { margin-right: 10px; } .m3 { margin-right: 20px; } .m4 { margin-right: 32px; }
.w7foot { height: 34px; background: #f0f0f0; display: flex; justify-content: flex-end; padding: 8px 7px; border-top: 1px solid #dfdfdf; }
.w7foot button { width: 74px; height: 18px; border: 2px solid #3aa3cc; padding-right: 19px; line-height: 13px; text-align: right; }

/* remote session window */
.rdp { position: absolute; left: 103px; top: 56px; width: 1034px; height: 803px; padding: 0 5px 5px; border-radius: 6px; background: #23252f; box-shadow: inset 0 0 0 1px #14151b, 0 5px 22px 2px rgba(0, 0, 0, 0.42); }
.rdp-title { height: 30px; display: flex; align-items: center; color: #fff; }
.logo { width: 13px; height: 16px; margin-left: 7px; }
.rdp-title h1 { flex: 1; padding-left: 6px; text-align: center; font: bold 11.500px/30px "Open Sans", sans-serif; letter-spacing: -0.05px; }
.round { width: 18px; height: 18px; margin-right: 6px; border: 1px solid #0b0c10; border-radius: 50%; background: #333845; }
.round.blue { margin-right: 2px; background: #2777ff; border-color: #2777ff; display: flex; align-items: center; justify-content: center; }
.round svg { width: 12px; height: 12px; }
.session { position: relative; height: 768px; background: #fff; overflow: hidden; }

.ie-win { height: 728px; overflow: hidden; position: relative; color: #8a8a8a; }
.ie-back { position: absolute; left: 1px; top: 22px; width: 34px; height: 34px; border: 1px solid #999; border-radius: 50%; }
.ie-controls { height: 27px; display: flex; justify-content: flex-end; align-items: center; gap: 35px; padding: 1px 19px 0 0; }
.ie-controls svg { width: 11px; height: 11px; }
.ie-tabs { height: 27px; display: flex; align-items: center; }
.ie-tab, .ie-stub { height: 27px; display: flex; align-items: center; border-top: 1px solid #aaa; border-right: 1px solid #a5a5a5; }
.ie-tab { width: 189px; padding-left: 5px; color: #000; background: #fff; }
.ie-tab.old { width: 82px; margin-left: 619px; padding-left: 0; color: #333; background: #dcdcdc; }
.ie-stub { width: 27px; background: #dcdcdc; margin-right: 3px; }
.ie-tab span { margin: 0 5px 0 4px; letter-spacing: -0.25px; }
.tx { width: 8px; height: 8px; color: #999; stroke-width: 2.400; }
.e16 { width: 16px; height: 16px; }
.ie-tabs > svg { width: 19px; height: 18px; margin: -5px 0 0 5.500px; }
h2 { margin: 81px 0 0 618px; color: #2a7bf5; font: 300 49px/74px "Open Sans", sans-serif; letter-spacing: -0.9px; }

.save { position: absolute; left: 7px; top: 0; width: 611px; height: 441px; background: #fff; border: 1px solid #a6a6a8; display: flex; flex-direction: column; }
.save-title { height: 29px; flex: none; display: flex; align-items: center; padding-left: 8px; color: #8f8f8f; }
.save-title span { flex: 1; margin-left: 5px; padding-top: 1px; }
.cx { width: 11px; height: 11px; margin-right: 10px; }
.save-nav { height: 36px; flex: none; display: flex; align-items: center; color: #d6d6d6; padding-bottom: 1px; }
.ar { width: 13px; height: 12px; margin: 0 0 0 13px; stroke-width: 2.100; }
.fwd { transform: scaleX(-1); margin-left: 17px; }
.mini { width: 7px; height: 5px; margin-left: 13px; color: #ccc; stroke-width: 2; }
.up { transform: rotate(90deg); margin-left: 11px; color: #aaa; }
.addr { width: 278px; height: 22px; margin-left: 6px; display: flex; align-items: center; border: 1px solid #d5d5d5; color: #000; padding-left: 2px; }
.addr span { margin-top: -2px; }
.screen { width: 16px; height: 12px; margin: -2px 4px 0 0; background: #1b9dff; border: 1px solid #0a6cc0; border-bottom-width: 2px; }
.crumb { width: 8px; height: 5px; margin-left: 9px; transform: rotate(-90deg); color: #555; stroke-width: 2.200; }
.drop { width: 9px; height: 6px; margin: 1px 5px 0 auto; color: #777; stroke-width: 2.400; }
.refresh { width: 20px; height: 20px; border-left: 1px solid #d5d5d5; display: flex; align-items: center; justify-content: center; }
.refresh svg { width: 12px; height: 14px; transform: scaleX(-1); }
.search { width: 202px; height: 22px; margin-left: 11px; display: flex; align-items: center; border: 1px solid #d5d5d5; color: #707070; padding: 0 8px; }
.search span { flex: 1; letter-spacing: -0.45px; margin-top: -1px; }
.search svg { width: 13px; height: 13px; stroke-width: 1.900; color: #666; }
.save-cmd { height: 31px; flex: none; display: flex; align-items: center; padding-left: 18px; background: linear-gradient(90deg, #f4f5f7 70%, #f0f4fa); border-bottom: 1px solid #e2e5e9; color: #1e395b; }
.save-cmd .tri { margin-left: 5px; }
.nf { margin-left: 30px; flex: 1; }
.view { width: 16px; height: 16px; } .save-cmd .view + .tri { margin-left: 9px; }
.save-cmd .help { width: 17px; height: 17px; margin: 0 14.500px 0 29.500px; }
.save-body { flex: 1; display: flex; overflow: hidden; }
aside { width: 159px; flex: none; height: 100%; border-right: 1px solid #ededed; padding: 12px 0 0 26px; display: flex; align-items: flex-start; gap: 5px; }
aside svg { width: 14px; height: 13px; margin-top: 1px; }
ul { list-style: none; padding-top: 4px; padding-left: 20px; }
li { height: 56px; display: flex; align-items: center; gap: 7px; }
li svg { width: 45px; height: 44px; margin-top: 4px; }
.save-pane { position: relative; height: 117px; flex: none; background: #f0f0f0; padding-top: 11px; }
label { display: flex; align-items: center; margin-bottom: 3px; }
label > span { width: 120px; text-align: right; margin-right: 5px; }
.field { width: 300px; height: 22px; border: 1px solid #777; background: #fff; font-weight: 400; line-height: 20px; padding-left: 5px; }
.select { border-color: #acacac; background: #e1e1e1; padding-left: 3px; }
u { text-underline-offset: 2px; }
.actions { display: flex; align-items: center; height: 22px; margin-top: 23px; }
.hide { width: 184px; padding: 5px 0 0 13px; display: flex; align-items: center; gap: 7px; }
.hide svg { width: 10px; height: 7px; transform: scaleY(-1); stroke-width: 2; color: #444; }
.enc { width: 58px; }
.box { height: 22px; line-height: 20px; border: 1px solid #acacac; background: #e1e1e1; }
.combo2 { width: 150px; padding: 0 5px 0 4px; display: flex; align-items: center; justify-content: space-between; }
.combo2 svg { width: 10px; height: 7px; color: #555; stroke-width: 1.300; }
.btn { width: 86px; height: 23px; margin: 1px 0 0 14px; text-align: center; }
.combo2 + .btn { margin-left: 13px; }
.grip { position: absolute; right: 2px; bottom: 1px; width: 9px; height: 9px; }

.error { position: absolute; left: 225px; top: 248px; width: 558px; height: 163px; background: #fff; border: 1px solid #1c82cf; display: flex; flex-direction: column; }
.error-title { height: 30px; display: flex; align-items: center; justify-content: space-between; padding: 0 10px 0 8px; }
.error-title svg { width: 11px; height: 11px; margin-top: -1px; }
.error-body { flex: 1; display: flex; padding: 11px 0 0 11px; gap: 11px; }
.error-body svg { width: 30px; height: 30px; }
.error-body p { margin-top: 5px; letter-spacing: -0.32px; }
.wide { letter-spacing: -0.25px; }
.error-foot { height: 42px; background: #f0f0f0; border-top: 1px solid #dfdfdf; display: flex; justify-content: flex-end; padding: 9px 11px 0 0; }
.error-foot button { width: 66px; height: 21px; padding: 0; font: inherit; letter-spacing: inherit; color: #000; background: #e1e1e1; border: 2px solid #0078d7; }
.error-foot button span { display: block; height: 17px; line-height: 16px; border: 1px dotted #111; }

.taskbar { height: 40px; display: flex; align-items: stretch; background: linear-gradient(90deg, #020306, #06040f 36%, #030510 60%, #010208); position: relative; z-index: 1; }
.tc { width: 48px; display: flex; align-items: center; justify-content: center; }
.tv { width: 46px; margin-right: 4px; }
.s16 { width: 16px; height: 16px; } .s20 { width: 20px; height: 14px; }
.app { width: 49px; position: relative; }
.app svg { width: 24px; height: 24px; } .app.explorer svg { width: 23px; height: 20px; } .app.powershell svg { width: 24px; height: 18px; }
.app.open::after { content: ""; position: absolute; left: 5px; bottom: 0; width: 40px; height: 2px; background: #76b9ed; }
.tray { align-self: center; }
.vol { width: 18px; height: 16px; margin-left: auto; }
.net { width: 18px; height: 16px; margin: 0 7px; }
.when { width: 56px; display: flex; flex-direction: column; align-items: center; justify-content: center; color: #fff; line-height: 18px; letter-spacing: -0.460px; }
.note { width: 17px; height: 16px; margin: 0 19px 0 16px; }
.peek { width: 1px; margin-right: 4px; background: #55565c; }
</style>
